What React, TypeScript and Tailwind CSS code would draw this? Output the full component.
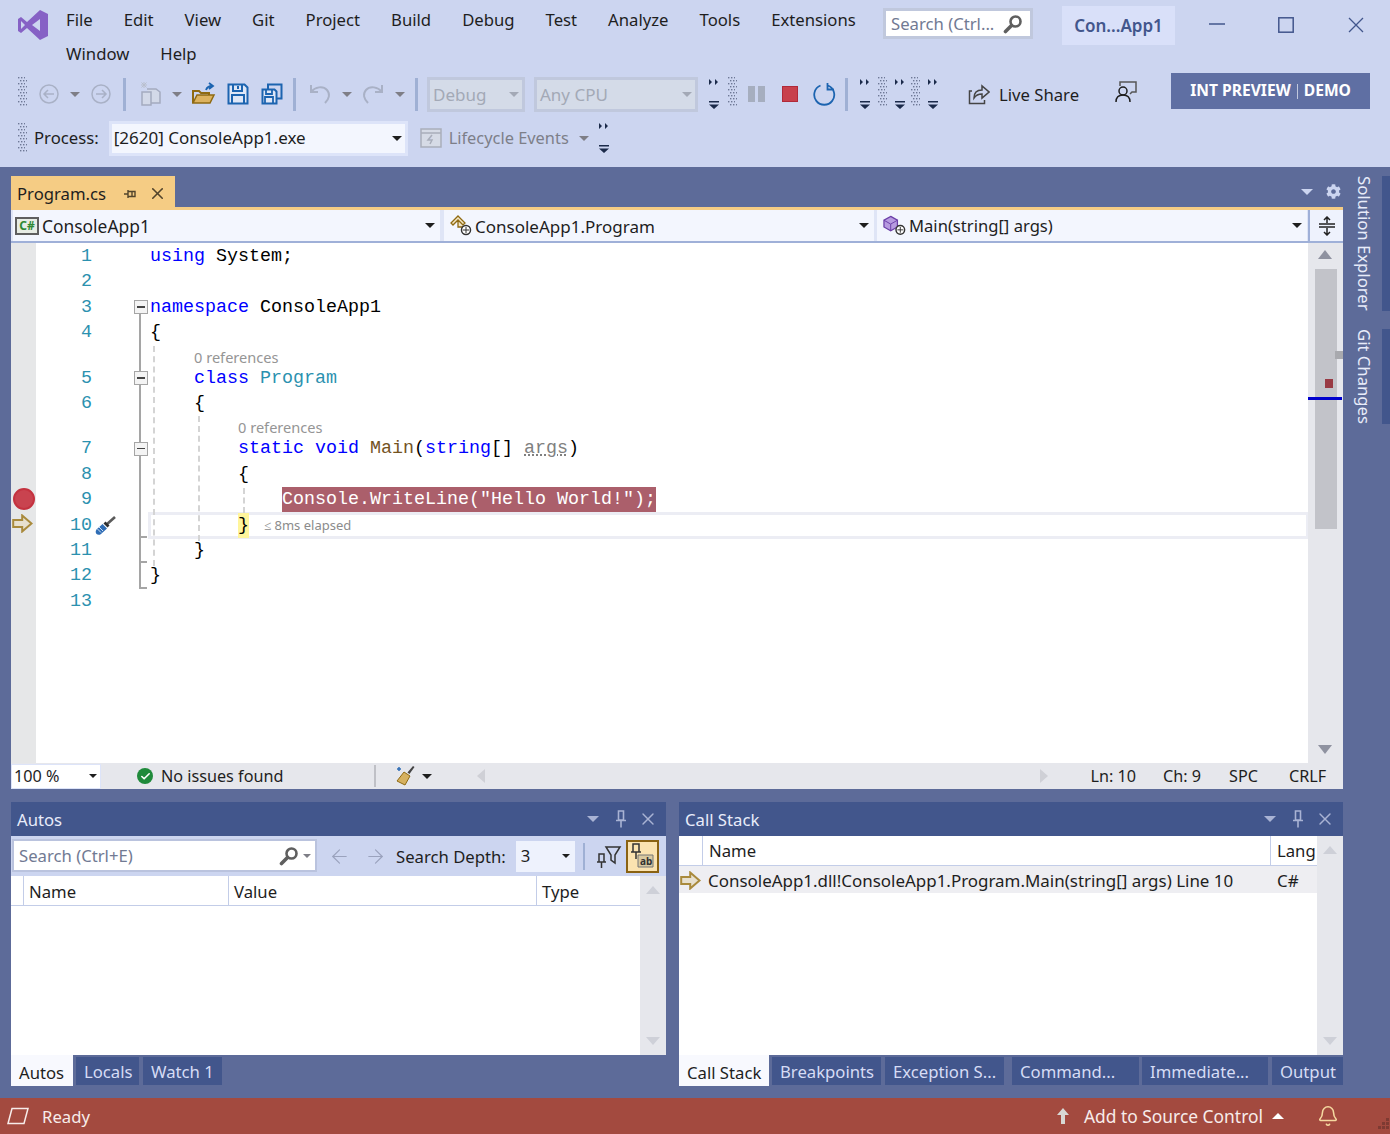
import { ReactNode } from "react";
import { ArrowLeft, ArrowRight, Bell, Check, X } from "lucide-react";
import { FaCog } from "react-icons/fa";

const menuItems = ["File", "Edit", "View", "Git", "Project", "Build", "Debug", "Test", "Analyze", "Tools", "Extensions", "Window", "Help"];

type CodeRow = {
  num: number;
  code?: ReactNode;
  lens?: string;
  fold?: "box" | "line" | "tick" | "end" | "boxStart";
};

const kw = "text-[#0000ff]";
const ty = "text-[#2b91af]";

const rows: CodeRow[] = [
  { num: 1, code: <><span className={kw}>using</span> System;</> },
  { num: 2 },
  { num: 3, fold: "boxStart", code: <><span className={kw}>namespace</span> ConsoleApp1</> },
  { num: 4, fold: "line", code: "{" },
  { num: 5, fold: "box", lens: "0 references", code: <>{"    "}<span className={kw}>class</span> <span className={ty}>Program</span></> },
  { num: 6, fold: "line", code: "    {" },
  { num: 7, fold: "box", lens: "0 references", code: <>{"        "}<span className={kw}>static</span> <span className={kw}>void</span> <span className="text-[#74531f]">Main</span>(<span className={kw}>string</span>[] <span className="text-[#808080] underline decoration-dotted">args</span>)</> },
  { num: 8, fold: "line", code: "        {" },
  { num: 9, fold: "line", code: <>{"            "}<span className="inline-block h-[25px] bg-[#ab5f6b] text-white">Console.WriteLine("Hello World!");</span></> },
  { num: 10, fold: "tick", code: <>{"        "}<span className="inline-block h-[25px] bg-[#fff59b]">{"}"}</span></> },
  { num: 11, fold: "tick", code: "    }" },
  { num: 12, fold: "end", code: "}" },
  { num: 13 },
];

function Gripper({ className = "" }: { className?: string }) {
  const dots = [0, 1, 2, 3, 4, 5, 6, 7, 8, 9];
  return (
    <svg width="9" height="30" viewBox="0 0 9 30" className={className}>
      {dots.map((i) => (
        <g key={i} fill="#6e7896">
          <rect x={i % 2 ? 2 : 0} y={i * 3} width="1.4" height="1.4" />
          <rect x={i % 2 ? 5 : 3} y={i * 3} width="1.4" height="1.4" />
          <rect x={i % 2 ? 8 : 6} y={i * 3} width="1" height="1.4" />
        </g>
      ))}
    </svg>
  );
}

function Overflow({ className = "" }: { className?: string }) {
  return (
    <svg width="12" height="31" viewBox="0 0 12 31" className={className}>
      <path d="M1 0l3 3-3 3zM7 0l3 3-3 3z" fill="#1b2a4a" />
      <path d="M1 22h10v1.500H1zM1 25.500h10L6 30z" fill="#1b2a4a" />
    </svg>
  );
}

function Caret({ color = "#1e1e1e", className = "" }: { color?: string; className?: string }) {
  return (
    <svg width="10" height="5" viewBox="0 0 10 5" className={className}>
      <path d="M0 0h10L5 5z" fill={color} />
    </svg>
  );
}

function ToolSep({ className = "" }: { className?: string }) {
  return <div className={`h-[33px] w-[3px] bg-[#9fb0d4] ${className}`} />;
}

function YellowArrow({ className = "" }: { className?: string }) {
  return (
    <svg width="21" height="19" viewBox="0 0 21 19" className={className}>
      <path d="M1.200 6h9V1.500L19.500 9.500 10.200 17.500V13h-9z" fill="#e7e0cf" stroke="#a98a3c" strokeWidth="2" />
    </svg>
  );
}

function Magnifier({ className = "" }: { className?: string }) {
  return (
    <svg width="20" height="20" viewBox="0 0 20 20" className={className}>
      <circle cx="12.500" cy="7.500" r="5" fill="none" stroke="#5f5f5f" strokeWidth="2.600" />
      <path d="M8.500 11.500L2.500 17.500" stroke="#5f5f5f" strokeWidth="3.600" strokeLinecap="round" />
    </svg>
  );
}

function SmallPin({ color, className = "" }: { color: string; className?: string }) {
  return (
    <svg width="12" height="18" viewBox="0 0 12 18" className={className}>
      <path d="M3.500 1h5v9h-5zM1 10.500h10M6 10.500v7" fill="none" stroke={color} strokeWidth="1.600" />
    </svg>
  );
}

function PanelHeader({ title }: { title: string }) {
  return (
    <div className="flex h-[34px] items-center bg-[#42568c] pl-[6px] text-[#e8ecfa]">
      <span className="pt-[1px]">{title}</span>
      <div className="ml-auto flex items-center">
        <Caret color="#a9b3d4" className="mr-[16px] h-[6px] w-[12px]" />
        <SmallPin color="#a9b3d4" className="mr-[11px]" />
        <X size={20} color="#a9b3d4" strokeWidth={1.700} className="mr-[8px]" />
      </div>
    </div>
  );
}

function BottomTab({ label, width, active = false, gap = 3 }: { label: string; width: number; active?: boolean; gap?: number }) {
  if (active) {
    return (
      <div style={{ width }} className="flex h-[31px] items-center bg-[#f8f9fe] pl-[8px] pt-[4px] text-[#1e1e1e]">
        {label}
      </div>
    );
  }
  return (
    <div style={{ width, marginLeft: gap }} className="mb-[2px] mt-[2px] flex h-[28px] items-center whitespace-nowrap bg-[#42568c] pl-[8px] pt-[2px] text-[#d6dcf5]">
      {label}
    </div>
  );
}

function SideScroll({ className = "" }: { className?: string }) {
  return (
    <div className={`flex flex-col items-center justify-between bg-[#e6e7ec] px-0 py-[10px] ${className}`}>
      <svg width="14" height="8" viewBox="0 0 14 8"><path d="M0 8L7 0l7 8z" fill="#ced0d8" /></svg>
      <svg width="14" height="8" viewBox="0 0 14 8"><path d="M0 0l7 8 7-8z" fill="#ced0d8" /></svg>
    </div>
  );
}

function EditorRow({ row }: { row: CodeRow }) {
  const isCurrent = row.num === 10;
  return (
    <div className={`relative flex shrink-0 ${row.lens ? "h-[45.4px]" : "h-[25.4px]"}`}>
      <div className="flex w-[25px] shrink-0 items-end justify-center bg-[#e6e7e8]">
        {row.num === 9 && (
          <div className="mb-[3px] ml-[1px] h-[22px] w-[22px] rounded-full border-2 border-[#c4323f] bg-[#c9434f]" />
        )}
        {row.num === 10 && <YellowArrow className="mb-[5px] ml-[-2px]" />}
      </div>
      <div className="flex w-[56px] shrink-0 items-end justify-end">
        <span className="h-[25.4px] leading-[25.4px] text-[#2b91af]">{row.num}</span>
      </div>
      <div className="flex w-[42px] shrink-0 items-end pb-[2px] pl-[2px]">
        {row.num === 10 && (
          <svg width="23" height="22" viewBox="0 0 23 22">
            <path d="M12 11L21 3" stroke="#5a5a5a" strokeWidth="2.600" />
            <path d="M9.500 9.500l4 4 2-2-4-4z" fill="#2e2e2e" />
            <path d="M8.500 10l4.500 4.500-6 5.500c-1.500 1.200-3.500 1-4.500 0s-1.200-3 0-4.500z" fill="#2f6db5" />
            <path d="M5 13l4 4M3.500 15l3.500 3.500" stroke="#cfe0f5" strokeWidth="1" />
          </svg>
        )}
      </div>
      <div className="relative w-[16px] shrink-0">
        {row.fold && row.fold !== "boxStart" && (
          <div className="absolute left-[5px] top-0 h-full w-[2px] bg-[#a5a5a5]" />
        )}
        {row.fold === "boxStart" && <div className="absolute bottom-0 left-[5px] h-[10px] w-[2px] bg-[#a5a5a5]" />}
        {(row.fold === "tick" || row.fold === "end") && (
          <div className="absolute bottom-0 left-[5px] h-[2px] w-[8px] bg-[#a5a5a5]" />
        )}
        {(row.fold === "box" || row.fold === "boxStart") && (
          <div className="absolute bottom-[6px] left-0 flex h-[14px] w-[14px] items-center justify-center border border-[#a5a5a5] bg-[#f4f4f4]">
            <div className="h-[1.500px] w-[8px] bg-[#444]" />
          </div>
        )}
      </div>
      <div className="relative min-w-0 flex-1 self-stretch">
        {row.lens && (
          <div className={`font-['Noto_Sans'] absolute top-[1px] h-[20px] text-[14.6px] leading-[20px] text-[#959595] ${row.num === 5 ? "left-[44px]" : "left-[88px]"}`}>
            {row.lens}
          </div>
        )}
        {isCurrent && (
          <div className="pointer-events-none absolute bottom-[-1px] left-[-2px] right-[-1px] top-[-1px] border-[3px] border-[#ecedf4]" />
        )}
        <div className="absolute inset-x-0 bottom-0 h-[25.4px] whitespace-pre text-[18.33px] leading-[25.4px] text-black">
          {row.code}
          {isCurrent && (
            <span className="font-['Noto_Sans'] absolute left-[114px] top-0 text-[13px] text-[#8b8b8b]">≤ 8ms elapsed</span>
          )}
        </div>
      </div>
    </div>
  );
}

function NavCombo({ icon, text, className = "", textClass = "text-[17px]" }: { icon: ReactNode; text: string; className?: string; textClass?: string }) {
  return (
    <div className={`flex h-[31px] items-center bg-[#f3f6fe] ${className}`}>
      {icon}
      <span className={`ml-[1px] pt-[2px] ${textClass}`}>{text}</span>
      <Caret className="ml-auto mr-[5px]" />
    </div>
  );
}

export default function App() {
  return (
    <div className="font-['Noto_Sans'] flex h-[1134px] w-[1390px] flex-col overflow-hidden bg-[#5d6b99] text-[16.7px] text-[#1e1e1e]">
      <div className="h-[167px] shrink-0 bg-[#ccd5f0]">
        <div className="flex h-[72px]">
          <svg width="32" height="32" viewBox="0 0 32 32" className="ml-[17px] mt-[9px] shrink-0">
            <path d="M23 1L31 5V27L23 31L10 19L4 24L1 22V10L4 8L10 13ZM23 10L15 16L23 22ZM4 12V20L8 16Z" fillRule="evenodd" fill="#8661c5" />
          </svg>
          <div className="ml-[17px] flex w-[815px] shrink-0 flex-wrap content-start gap-x-[31px]">
            {menuItems.map((m) => (
              <div key={m} className="flex h-[34px] items-center pt-[6px]">{m}</div>
            ))}
          </div>
          <div className="ml-[2px] mt-[8px] flex h-[31px] w-[150px] shrink-0 items-center border-[3px] border-[#c0c8dd] bg-white pl-[5px] text-[#717a93]">
            <span className="pt-[1px]">Search (Ctrl...</span>
            <Magnifier className="ml-auto mr-[7px]" />
          </div>
          <div className="ml-[29px] mt-[6px] flex h-[39px] w-[113px] shrink-0 items-center justify-center bg-[#d9e0f9] text-[17px] font-semibold text-[#42568c]">
            Con...App1
          </div>
          <svg width="16" height="2" viewBox="0 0 16 2" className="ml-[34px] mt-[23px]">
            <path d="M0 1h16" stroke="#42568c" strokeWidth="1.500" />
          </svg>
          <svg width="16" height="16" viewBox="0 0 16 16" className="ml-[53px] mt-[17px]">
            <rect x="0.800" y="0.800" width="14.400" height="14.400" fill="none" stroke="#42568c" strokeWidth="1.500" />
          </svg>
          <svg width="16" height="16" viewBox="0 0 16 16" className="ml-[54px] mt-[17px]">
            <path d="M1 1l14 14M15 1L1 15" stroke="#42568c" strokeWidth="1.300" />
          </svg>
        </div>

        <div className="flex h-[44px] items-center">
          <Gripper className="ml-[18px] mt-[-4px]" />
          <svg width="22" height="22" viewBox="0 0 22 22" className="ml-[11px]">
            <circle cx="11" cy="11" r="9" fill="none" stroke="#a9b1c6" strokeWidth="1.500" />
            <path d="M16 11H6M10 7l-4 4 4 4" fill="none" stroke="#a9b1c6" strokeWidth="1.500" />
          </svg>
          <Caret color="#7e7e86" className="ml-[10px]" />
          <svg width="22" height="22" viewBox="0 0 22 22" className="ml-[10px]">
            <circle cx="11" cy="11" r="9" fill="none" stroke="#a9b1c6" strokeWidth="1.500" />
            <path d="M6 11h10M12 7l4 4-4 4" fill="none" stroke="#a9b1c6" strokeWidth="1.500" />
          </svg>
          <ToolSep className="ml-[11px]" />
          <svg width="25" height="26" viewBox="0 0 25 26" className="ml-[12px]">
            <path d="M9 8h9l4 3v11h-9M4 11h9v13H4z" fill="#d3d9e8" stroke="#a4abbf" strokeWidth="1.500" />
            <path d="M6 1v6M3 4h6M3.500 1.500l5 5M8.500 1.500l-5 5" stroke="#b9bfcd" strokeWidth="1" />
          </svg>
          <Caret color="#7e7e86" className="ml-[9px]" />
          <svg width="24" height="24" viewBox="0 0 24 24" className="ml-[10px]">
            <path d="M1 21V9h6l2 2h8v2" fill="none" stroke="#8f6a12" strokeWidth="2" />
            <path d="M1 21l4-8h17l-4 8z" fill="#dcb25f" stroke="#8f6a12" strokeWidth="1.500" />
            <path d="M14 8c1-3 3-4 6-4M17 1l4 3-4 3" fill="none" stroke="#1c64b0" strokeWidth="1.800" />
          </svg>
          <svg width="22" height="22" viewBox="0 0 22 22" className="ml-[11px]">
            <path d="M1.500 1.500h16l3 3v16h-19z" fill="#dfe7f7" stroke="#1c64b0" strokeWidth="2" />
            <path d="M6 2v6h9V2M5 20v-8h12v8M11 3v3" fill="none" stroke="#1c64b0" strokeWidth="2" />
          </svg>
          <svg width="22" height="22" viewBox="0 0 22 22" className="ml-[12px]">
            <path d="M7 6V1.500h13.500v14H16" fill="none" stroke="#1c64b0" strokeWidth="2" />
            <path d="M1.500 6.500h12l2 2v12h-14z" fill="#dfe7f7" stroke="#1c64b0" strokeWidth="2" />
            <path d="M5 7v4h6V7M4 20v-6h8v6" fill="none" stroke="#1c64b0" strokeWidth="1.800" />
          </svg>
          <ToolSep className="ml-[10px]" />
          <svg width="22" height="22" viewBox="0 0 22 22" className="ml-[14px]">
            <path d="M1 2v7h7M1.500 8.500C5 4 13 2.500 17 7c3.500 4 2 9-2 13" fill="none" stroke="#a9b1c6" strokeWidth="2" />
          </svg>
          <Caret color="#7e7e86" className="ml-[10px]" />
          <svg width="22" height="22" viewBox="0 0 22 22" className="ml-[9px]">
            <path d="M21 2v7h-7M20.500 8.500C17 4 9 2.500 5 7c-3.500 4-2 9 2 13" fill="none" stroke="#a9b1c6" strokeWidth="2" />
          </svg>
          <Caret color="#7e7e86" className="ml-[12px]" />
          <ToolSep className="ml-[10px]" />
          <div className="ml-[9px] flex h-[35px] w-[98px] items-center border-[3px] border-[#c0c8dd] bg-[#d4dbe8] pl-[3px] pt-[1px] text-[17px] text-[#a3a9b6]">
            Debug
            <Caret color="#a3a9b6" className="ml-auto mr-[3px]" />
          </div>
          <div className="ml-[9px] flex h-[35px] w-[164px] items-center border-[3px] border-[#c0c8dd] bg-[#d4dbe8] pl-[3px] pt-[1px] text-[17px] text-[#a3a9b6]">
            Any CPU
            <Caret color="#a3a9b6" className="ml-auto mr-[3px]" />
          </div>
          <Overflow className="ml-[10px]" />
          <Gripper className="ml-[8px] mt-[-4px]" />
          <svg width="17" height="16" viewBox="0 0 17 16" className="ml-[11px]">
            <path d="M0 0h7v16H0zM10 0h7v16h-7z" fill="#a6aebf" />
          </svg>
          <div className="ml-[17px] h-[16px] w-[16px] border border-[#b0293a] bg-[#c8404c]" />
          <svg width="24" height="24" viewBox="0 0 24 24" className="ml-[14px]">
            <path d="M8.500 3.500A10 10 0 1 0 16 3.500M15.500 1v6.500H22" fill="none" stroke="#1c64b0" strokeWidth="1.800" />
          </svg>
          <ToolSep className="ml-[9px]" />
          <Overflow className="ml-[11px]" />
          <Gripper className="ml-[7px] mt-[-4px]" />
          <Overflow className="ml-[7px]" />
          <Gripper className="ml-[5px] mt-[-4px]" />
          <Overflow className="ml-[7px]" />
          <svg width="22" height="22" viewBox="0 0 22 22" className="ml-[29px]">
            <path d="M4 8H1.500v12.500h15V17" fill="none" stroke="#444" strokeWidth="1.500" />
            <path d="M6 15c0-5 3-8 8-8V3l7 6-7 6v-4c-3 0-6 1-8 4z" fill="none" stroke="#444" strokeWidth="1.500" />
          </svg>
          <span className="ml-[9px] pt-[1px]">Live Share</span>
          <svg width="22" height="22" viewBox="0 0 22 22" className="ml-[36px] mt-[-4px]">
            <path d="M5 5V1h16v10h-4l-2 2" fill="none" stroke="#555" strokeWidth="1.500" />
            <circle cx="8" cy="10" r="4" fill="#ccd5f0" stroke="#1e1e1e" strokeWidth="1.500" />
            <path d="M1 21c0-5 3-7 7-7s7 2 7 7" fill="none" stroke="#1e1e1e" strokeWidth="1.500" />
          </svg>
          <div className="ml-[34px] mt-[-6px] flex h-[36px] w-[199px] items-center justify-center bg-[#5f6fa3] text-[15.600px] font-bold text-white">
            INT PREVIEW
            <span className="mx-[6px] h-[15px] w-[1px] bg-[#c0c8dd]" />
            DEMO
          </div>
        </div>

        <div className="flex h-[44px] items-center">
          <Gripper className="ml-[18px]" />
          <span className="ml-[7px]">Process:</span>
          <div className="ml-[10px] flex h-[35px] w-[299px] items-center border-[3px] border-[#dde4f9] bg-[#f3f6fe] pl-[2px] text-[17px]">
            [2620] ConsoleApp1.exe
            <Caret className="ml-auto mr-[3px]" />
          </div>
          <svg width="22" height="20" viewBox="0 0 22 20" className="ml-[12px]">
            <path d="M1 1h20v18H1zM1 5h20M12 7l-4 5h4l-2 4" fill="#d6dbe6" stroke="#a9aeba" strokeWidth="1.500" />
          </svg>
          <span className="ml-[7px] text-[16.4px] text-[#7d7f89]">Lifecycle Events</span>
          <Caret color="#7e7e86" className="ml-[10px]" />
          <Overflow className="ml-[9px]" />
        </div>
      </div>

      <div className="flex min-h-0 flex-1">
        <div className="ml-[11px] flex w-[1332px] shrink-0 flex-col">
          <div className="flex h-[40px] shrink-0 items-end">
            <div className="flex h-[31px] w-[164px] items-center bg-[#f5cc84] pl-[6px] pt-[4px]">
              Program.cs
              <svg width="12" height="12" viewBox="0 0 12 12" className="ml-[18px]">
                <path d="M0 6h4M4 2v8M4 3.500h7v5H4M8 3.500v5" fill="none" stroke="#52442b" strokeWidth="1.400" />
              </svg>
              <X size={19} strokeWidth={2} color="#52442b" className="ml-[12px]" />
            </div>
            <div className="ml-auto flex items-center pb-[8px]">
              <Caret color="#ccd5f0" className="mr-[13px] h-[6px] w-[12px]" />
              <FaCog size={15} color="#ccd5f0" className="mr-[2px]" />
            </div>
          </div>
          <div className="h-[3px] shrink-0 bg-[#f5cc84]" />
          <div className="flex h-[33px] shrink-0 items-start border-b-2 border-[#9fb0d8] bg-[#dfe5f6]">
            <NavCombo
              className="ml-[2px] w-[427px]"
              text="ConsoleApp1"
              textClass="text-[17.4px]"
              icon={
                <div className="ml-[2px] mr-[2px] flex h-[18px] w-[24px] items-center justify-center border-2 border-[#5f5f5f] bg-[#e7ece4] text-[12px] font-bold leading-none text-[#2f8a33]">
                  C#
                </div>
              }
            />
            <NavCombo
              className="ml-[4px] w-[430px]"
              text="ConsoleApp1.Program"
              icon={
                <svg width="24" height="22" viewBox="0 0 24 22" className="ml-[6px]">
                  <path d="M8 1l7 7-2 2-5-5-5 5-2-2zM8 6v6h5" fill="#f5e7c4" stroke="#8f6a12" strokeWidth="1.300" />
                  <circle cx="16" cy="15" r="4.500" fill="#fff" stroke="#333" strokeWidth="1.500" />
                  <path d="M16 12v6M13 15h6" stroke="#333" strokeWidth="1" />
                </svg>
              }
            />
            <NavCombo
              className="ml-[3px] w-[430px]"
              text="Main(string[] args)"
              textClass="text-[16.6px]"
              icon={
                <svg width="25" height="22" viewBox="0 0 26 22" className="ml-[6px]">
                  <path d="M8 1l7 4v7l-7 4-7-4V5z" fill="#b79be0" stroke="#6b3fa8" strokeWidth="1.300" />
                  <path d="M1 5l7 4 7-4M8 9v7" fill="none" stroke="#6b3fa8" strokeWidth="1" />
                  <circle cx="18" cy="15" r="4.500" fill="#fff" stroke="#333" strokeWidth="1.500" />
                  <path d="M18 12v6M15 15h6" stroke="#333" strokeWidth="1" />
                </svg>
              }
            />
            <div className="ml-[1px] flex h-[31px] w-[35px] items-center justify-center border-l-2 border-[#9fb0d8] bg-[#eef2fd]">
              <svg width="18" height="20" viewBox="0 0 18 20">
                <path d="M1 8h16M1 11h16M9 1v6M9 12v7M6 4l3-3 3 3M6 16l3 3 3-3" fill="none" stroke="#222" strokeWidth="1.500" />
              </svg>
            </div>
          </div>

          <div className="flex h-[520px] shrink-0">
            <div className="font-['Liberation_Mono'] relative flex w-[1297px] shrink-0 flex-col bg-white text-[18.33px]">
              <div className="h-[1px] w-[25px] shrink-0 bg-[#e6e7e8]" />
              {rows.map((r) => (
                <EditorRow key={r.num} row={r} />
              ))}
              <div className="w-[25px] flex-1 bg-[#e6e7e8]" />
              {/* indent guides */}
              <div className="absolute left-[142px] top-[103px] h-[220px] border-l-2 border-dashed border-[#d4d4d4]" />
              <div className="absolute left-[187px] top-[173px] h-[125px] border-l-2 border-dashed border-[#d4d4d4]" />
              <div className="absolute left-[232px] top-[245px] h-[25px] border-l-2 border-dashed border-[#d4d4d4]" />
            </div>
            <div className="relative flex w-[35px] shrink-0 flex-col items-center bg-[#e6e7ec] pt-[7px]">
              <svg width="14" height="9" viewBox="0 0 14 9" className="ml-[-2px]"><path d="M0 9L7 0l7 9z" fill="#8f92a0" /></svg>
              <div className="mt-[10px] h-[260px] w-[22px] bg-[#c2c3c9]" />
              <svg width="14" height="9" viewBox="0 0 14 9" className="mb-[9px] ml-[-2px] mt-auto"><path d="M0 0l7 9 7-9z" fill="#8f92a0" /></svg>
              <div className="absolute right-0 top-[108px] h-[8px] w-[8px] bg-[#a8a9ae]" />
              <div className="absolute left-[17px] top-[136px] h-[9px] w-[8px] bg-[#993a44]" />
              <div className="absolute left-0 top-[154px] h-[3px] w-[34px] bg-[#0000cd]" />
            </div>
          </div>

          <div className="flex h-[26px] shrink-0 items-center bg-[#e6e7ec] text-[16.2px]">
            <div className="flex h-[25px] w-[90px] items-center border border-[#dde4f9] bg-white pl-[2px]">
              100 %
              <Caret className="ml-auto mr-[3px] h-[4px] w-[8px]" />
            </div>
            <div className="ml-[36px] flex h-[16px] w-[16px] items-center justify-center rounded-full bg-[#1f8a3b]">
              <Check size={11} strokeWidth={3.500} color="white" />
            </div>
            <span className="ml-[8px]">No issues found</span>
            <div className="ml-[91px] h-[22px] w-[2px] bg-[#bfc0c6]" />
            <svg width="20" height="22" viewBox="0 0 20 22" className="ml-[19px]">
              <path d="M18 1l1.500 1-5 7-2-1.500z" fill="#444" />
              <path d="M9 7l6 4-5 9-8-4z" fill="#d6b15f" stroke="#8f6a12" strokeWidth="1" />
              <path d="M4 2v4M2 4h4" stroke="#2f6db5" strokeWidth="1.500" />
            </svg>
            <Caret className="ml-[7px]" />
            <svg width="8" height="14" viewBox="0 0 8 14" className="ml-[45px]"><path d="M8 0L0 7l8 7z" fill="#cfd0d6" /></svg>
            <svg width="8" height="14" viewBox="0 0 8 14" className="ml-[555px]"><path d="M0 0l8 7-8 7z" fill="#cfd0d6" /></svg>
            <span className="ml-[42px]">Ln: 10</span>
            <span className="ml-[27px]">Ch: 9</span>
            <span className="ml-[28px]">SPC</span>
            <span className="ml-[31px]">CRLF</span>
          </div>

          <div className="mt-[13px] flex gap-[13px]">
            <div className="flex w-[655px] shrink-0 flex-col">
              <PanelHeader title="Autos" />
              <div className="flex h-[40px] items-center bg-[#ccd5f0]">
                <div className="mb-[1px] ml-[1px] flex h-[33px] w-[305px] items-center border-[2px] border-[#bac3de] bg-white pl-[5px] text-[#717a93]">
                  Search (Ctrl+E)
                  <Magnifier className="ml-auto mr-[-2px]" />
                  <Caret color="#7e7e86" className="ml-[6px] mr-[4px] h-[4px] w-[8px]" />
                </div>
                <ArrowLeft size={23} strokeWidth={1.200} color="#9aa2bd" className="ml-[11px]" />
                <ArrowRight size={23} strokeWidth={1.200} color="#9aa2bd" className="ml-[13px]" />
                <span className="ml-[9px] pt-[1px]">Search Depth:</span>
                <div className="ml-[10px] flex h-[31px] w-[59px] items-center bg-[#eef2fd] pl-[5px]">
                  3
                  <Caret className="ml-auto mr-[5px] h-[4px] w-[8px]" />
                </div>
                <div className="ml-[8px] h-[27px] w-[2px] bg-[#9fb0d4]" />
                <svg width="26" height="26" viewBox="0 0 26 26" className="ml-[11px]">
                  <path d="M10 4h14l-5 8v8l-4-3v-5z" fill="none" stroke="#333" strokeWidth="1.500" />
                  <path d="M3 11h5v8H3zM1 19h9M5.500 19v6" fill="none" stroke="#333" strokeWidth="1.500" />
                </svg>
                <div className="ml-[4px] flex h-[33px] w-[33px] items-center justify-center border-[2px] border-[#8a6212] bg-[#fbe3b0]">
                  <svg width="24" height="26" viewBox="0 0 24 26">
                    <path d="M3 1h6v8H3zM1 9h10M6 9v7" fill="none" stroke="#333" strokeWidth="1.500" />
                    <path d="M8 12h15v12H8z" fill="#d9c9a0" stroke="#777" strokeWidth="1" />
                    <text x="10" y="22" fontSize="10" fontWeight="700" fill="#333" fontFamily="Noto Sans">ab</text>
                  </svg>
                </div>
              </div>
              <div className="flex h-[179px] bg-white">
                <div className="w-[629px] shrink-0">
                  <div className="flex h-[30px] items-center border-b border-[#c3cde8]">
                    <div className="h-full w-[13px] border-r border-[#c3cde8]" />
                    <div className="flex h-full w-[205px] items-center border-r border-[#c3cde8] pl-[5px] pt-[2px]">Name</div>
                    <div className="flex h-full w-[308px] items-center border-r border-[#c3cde8] pl-[5px] pt-[2px]">Value</div>
                    <div className="pl-[5px] pt-[2px]">Type</div>
                  </div>
                </div>
                <SideScroll className="w-[26px] shrink-0" />
              </div>
            </div>

            <div className="flex w-[664px] shrink-0 flex-col">
              <PanelHeader title="Call Stack" />
              <div className="flex h-[219px] bg-white">
                <div className="w-[638px] shrink-0">
                  <div className="flex h-[30px] items-center border-b border-[#c3cde8]">
                    <div className="h-full w-[24px] border-r border-[#c3cde8]" />
                    <div className="flex h-full w-[568px] items-center border-r border-[#c3cde8] pl-[6px] pt-[1px]">Name</div>
                    <div className="overflow-hidden pl-[6px] pt-[1px]">Lang</div>
                  </div>
                  <div className="flex h-[27px] items-center bg-[#eeeef2] pt-[2px] text-[16.95px]">
                    <YellowArrow className="ml-[1px]" />
                    <span className="ml-[7px] w-[569px] shrink-0 whitespace-nowrap">ConsoleApp1.dll!ConsoleApp1.Program.Main(string[] args) Line 10</span>
                    <span>C#</span>
                  </div>
                </div>
                <SideScroll className="w-[26px] shrink-0" />
              </div>
            </div>
          </div>

          <div className="flex h-[31px] shrink-0 gap-[13px]">
            <div className="flex w-[655px] shrink-0">
              <BottomTab label="Autos" width={62} active />
              <BottomTab label="Locals" width={63} gap={3} />
              <BottomTab label="Watch 1" width={79} gap={4} />
            </div>
            <div className="flex w-[664px] shrink-0">
              <BottomTab label="Call Stack" width={90} active />
              <BottomTab label="Breakpoints" width={109} />
              <BottomTab label="Exception S..." width={119} gap={4} />
              <BottomTab label="Command..." width={127} gap={8} />
              <BottomTab label="Immediate..." width={126} />
              <BottomTab label="Output" width={71} gap={4} />
            </div>
          </div>
        </div>

        <div className="relative min-w-0 flex-1 text-[#e8ecfa]">
          <div className="flex gap-[18px] pl-[11px] pt-[9px] [writing-mode:vertical-rl]">
            <span className="whitespace-nowrap leading-[20px]">Solution Explorer</span>
            <span className="whitespace-nowrap leading-[20px]">Git Changes</span>
          </div>
          <div className="absolute right-0 top-[9px] h-[135px] w-[8px] bg-[#42568c]" />
          <div className="absolute right-0 top-[162px] h-[95px] w-[8px] bg-[#42568c]" />
        </div>
      </div>

      <div className="flex h-[36px] shrink-0 items-center bg-[#a34a3f] text-[#f7ecea]">
        <svg width="24" height="18" viewBox="0 0 24 18" className="ml-[6px]">
          <path d="M6 1.500h16L18 16.500H2z" fill="none" stroke="#f7ecea" strokeWidth="1.500" />
        </svg>
        <span className="ml-[12px] pt-[1px]">Ready</span>
        <svg width="14" height="18" viewBox="0 0 14 18" className="ml-auto">
          <path d="M7 1l6 7H9v9H5V8H1z" fill="#d8d8d4" />
        </svg>
        <span className="ml-[14px] pt-[1px] text-[17.4px]">Add to Source Control</span>
        <svg width="12" height="6" viewBox="0 0 12 6" className="ml-[9px]"><path d="M0 6l6-6 6 6z" fill="#fff" /></svg>
        <Bell size={22} strokeWidth={1.700} color="#f5d9a0" className="ml-[33px]" />
        <svg width="16" height="16" viewBox="0 0 16 16" className="ml-[35px] mt-[16px]">
          <path d="M12 2h3v3h-3zM8 6h3v3H8zM12 6h3v3h-3zM4 10h3v3H4zM8 10h3v3H8zM12 10h3v3h-3z" fill="#7e3a32" />
        </svg>
      </div>
    </div>
  );
}
